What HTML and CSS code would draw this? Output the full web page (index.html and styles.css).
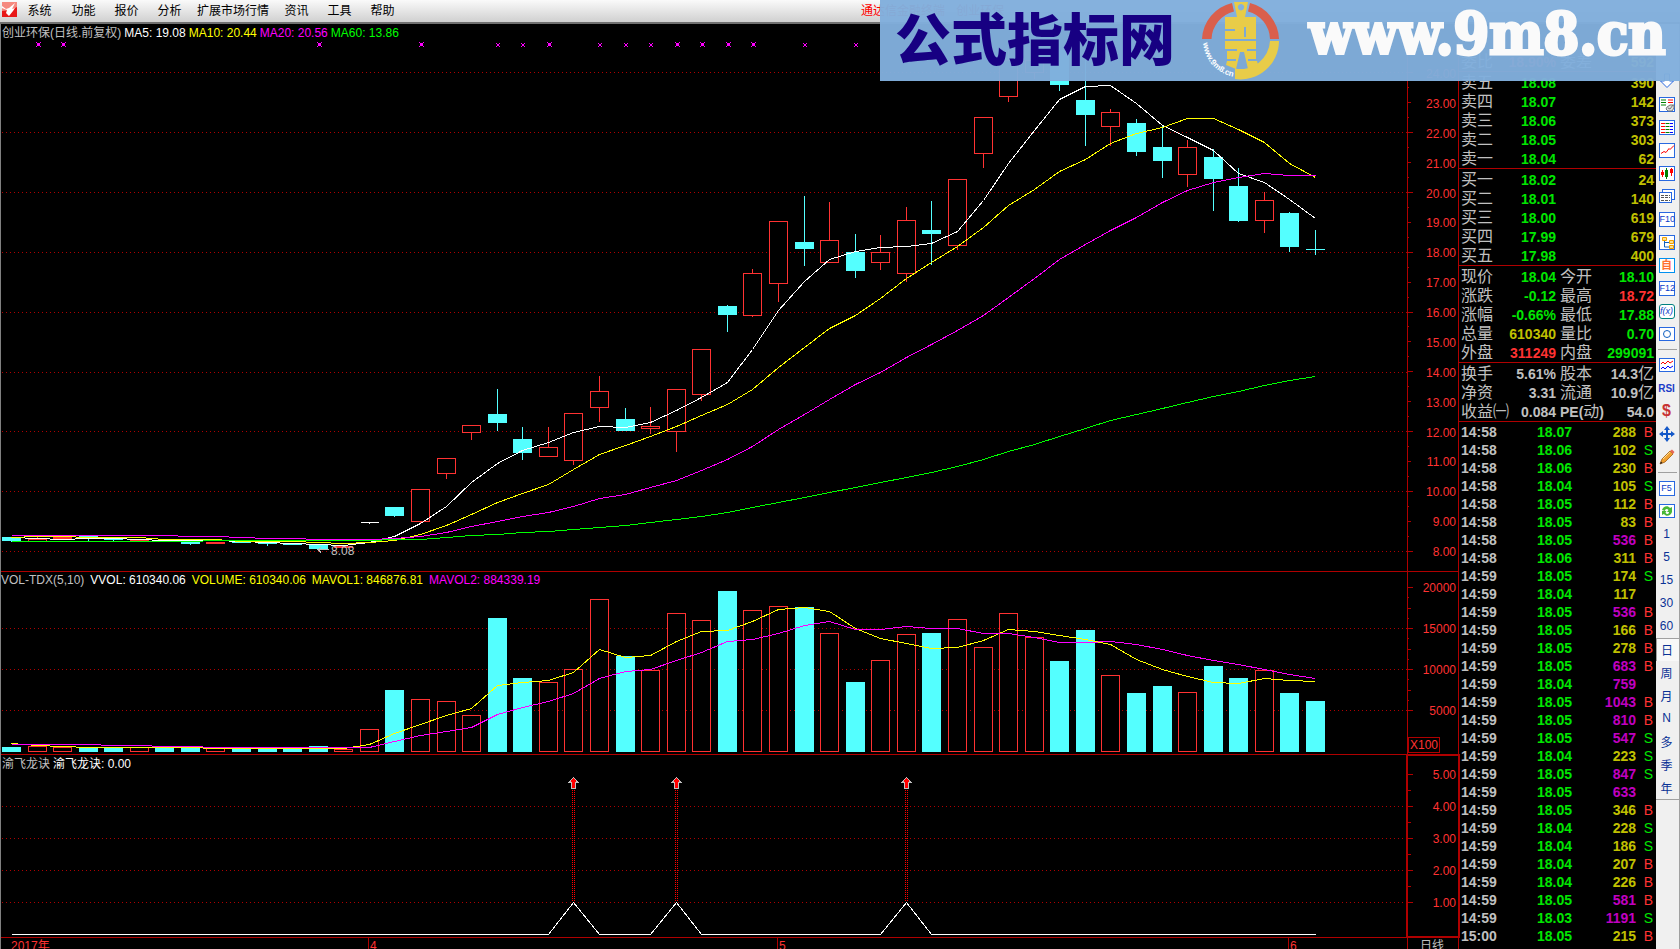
FILE: index.html
```html
<!DOCTYPE html>
<html lang="zh-CN">
<head>
  <meta charset="UTF-8" />
  <meta name="viewport" content="width=device-width, initial-scale=1" />
  <title>通达信金融终端 - 创业环保</title>
  <link rel="stylesheet" href="styles.css">
</head>
<body>
  <header class="menubar">
    <svg class="app-icon" viewBox="0 0 15 15">
      <rect width="15" height="15" fill="#e81818" />
      <path d="M0 0h15v5L9 8 0 9z" fill="#f58a80" />
      <path d="M0 4l4 3 3-1 6-5-3 6 3-1-2 3-4 5-3-3 1-3-5-2z" fill="#fff" />
    </svg>
    <nav class="menu">
      <button type="button">系统</button>
      <button type="button">功能</button>
      <button type="button">报价</button>
      <button type="button">分析</button>
      <button type="button" class="wide">扩展市场行情</button>
      <button type="button">资讯</button>
      <button type="button">工具</button>
      <button type="button">帮助</button>
    </nav>
    <div class="window-title">通达信金融终端 <span>创业环保</span></div>
  </header>

  <main class="workspace">
    <section class="charts">
      <div class="panel">
        <div class="plot">
          <svg id="pricePlot" viewBox="1 24 1406 547" preserveAspectRatio="none"></svg>
          <div class="legend">
            <span class="grey">创业环保(日线.前复权)</span>
            <span class="white">MA5: 19.08</span>
            <span class="yellow">MA10: 20.44</span>
            <span class="magenta">MA20: 20.56</span>
            <span class="lime">MA60: 13.86</span>
          </div>
        </div>
        <div class="axis">
          <svg id="priceTicks" viewBox="1408 24 50 547" preserveAspectRatio="none"></svg>
          <div class="scale scale-price" id="priceScale"></div>
        </div>
      </div>

      <div class="panel">
        <div class="plot">
          <svg id="volPlot" viewBox="1 572 1406 182" preserveAspectRatio="none"></svg>
          <div class="legend legend-vol">
            <span class="grey">VOL-TDX(5,10)</span>
            <span class="white">VVOL: 610340.06</span>
            <span class="yellow">VOLUME: 610340.06</span>
            <span class="yellow">MAVOL1: 846876.81</span>
            <span class="magenta">MAVOL2: 884339.19</span>
          </div>
        </div>
        <div class="axis">
          <svg id="volTicks" viewBox="1408 572 50 182" preserveAspectRatio="none"></svg>
          <div class="scale scale-vol">
            <span>20000</span><span>15000</span><span>10000</span><span>5000</span>
          </div>
          <span class="unit">X100</span>
        </div>
      </div>

      <div class="panel">
        <div class="plot">
          <svg id="signalPlot" viewBox="1 755 1406 182" preserveAspectRatio="none"></svg>
          <div class="legend">
            <span class="grey">渝飞龙诀</span>
            <span class="white">渝飞龙诀: 0.00</span>
          </div>
        </div>
        <div class="axis axis-active">
          <svg id="signalTicks" viewBox="1408 755 50 182" preserveAspectRatio="none"></svg>
          <div class="scale scale-signal">
            <span>5.00</span><span>4.00</span><span>3.00</span><span>2.00</span><span>1.00</span>
          </div>
        </div>
      </div>

      <div class="timeline">
        <div class="months">
          <span class="year">2017年</span>
          <span class="month">4</span>
          <span class="month">5</span>
          <span class="month">6</span>
        </div>
        <div class="period">日线</div>
      </div>
    </section>

    <aside class="quote">
      <table class="book book-head">
        <tr><th>委比</th><td class="red">18.90%</td><th>委差</th><td class="gold">592</td></tr>
      </table>
      <table class="book">
        <tr><th>卖五</th><td class="green">18.08</td><th></th><td class="gold">390</td></tr>
        <tr><th>卖四</th><td class="green">18.07</td><th></th><td class="gold">142</td></tr>
        <tr><th>卖三</th><td class="green">18.06</td><th></th><td class="gold">373</td></tr>
        <tr><th>卖二</th><td class="green">18.05</td><th></th><td class="gold">303</td></tr>
        <tr><th>卖一</th><td class="green">18.04</td><th></th><td class="gold">62</td></tr>
      </table>
      <table class="book">
        <tr><th>买一</th><td class="green">18.02</td><th></th><td class="gold">24</td></tr>
        <tr><th>买二</th><td class="green">18.01</td><th></th><td class="gold">140</td></tr>
        <tr><th>买三</th><td class="green">18.00</td><th></th><td class="gold">619</td></tr>
        <tr><th>买四</th><td class="green">17.99</td><th></th><td class="gold">679</td></tr>
        <tr><th>买五</th><td class="green">17.98</td><th></th><td class="gold">400</td></tr>
      </table>
      <table class="book">
        <tr><th>现价</th><td class="green">18.04</td><th>今开</th><td class="green">18.10</td></tr>
        <tr><th>涨跌</th><td class="green">-0.12</td><th>最高</th><td class="red">18.72</td></tr>
        <tr><th>涨幅</th><td class="green">-0.66%</td><th>最低</th><td class="green">17.88</td></tr>
        <tr><th>总量</th><td class="gold">610340</td><th>量比</th><td class="green">0.70</td></tr>
        <tr><th>外盘</th><td class="red">311249</td><th>内盘</th><td class="green">299091</td></tr>
      </table>
      <table class="book">
        <tr><th>换手</th><td>5.61%</td><th>股本</th><td>14.3<i>亿</i></td></tr>
        <tr><th>净资</th><td>3.31</td><th>流通</th><td>10.9<i>亿</i></td></tr>
        <tr><th>收益㈠</th><td>0.084</td><th><b>PE(</b>动<b>)</b></th><td>54.0</td></tr>
      </table>
      <div class="ticks">
        <table id="tickTable"></table>
      </div>
    </aside>

    <nav class="toolbar">
      <button type="button" aria-label="回退"></button>
      <button type="button" aria-label="上翻"></button>
      <button type="button" aria-label="下翻"><svg viewBox="0 0 16 16"><path d="M5.500 1v7h-4l6.500 6.500 6.500-6.500h-4v-7z" fill="#fff" stroke="#2868e0" /></svg></button>
      <button type="button" aria-label="报价"><svg viewBox="0 0 16 16"><rect class="frame" x=".5" y="1.500" width="15" height="14" /><path d="M2 4h5M2 6.500h5M2 9h5" stroke="#008000" /><path d="M9 4h5M9 6.500h5" stroke="#f00" /><path d="M8 11l3-2h4v3l-2 3H9l-2-2z" fill="#ddd" stroke="#777" /><path d="M9 12l2 1 3-4" stroke="#777" fill="none" /></svg></button>
      <button type="button" aria-label="列表"><svg viewBox="0 0 16 16"><rect class="frame" x=".5" y="1.500" width="15" height="14" /><path d="M2 4.500h4M2 7.500h4M2 10.500h4M2 13.500h4" stroke="#f00" /><path d="M6.500 4.500h4M6.500 7.500h4M6.500 10.500h4M6.500 13.500h4" stroke="#008000" /><path d="M11 4.500h3M11 7.500h3M11 10.500h3M11 13.500h3" stroke="#00f" /></svg></button>
      <button type="button" aria-label="分时"><svg viewBox="0 0 16 16"><rect class="frame" x=".5" y="1.500" width="15" height="14" /><path d="M2 11.500l3-2 2 1 3-4 1 1 4-4" fill="none" stroke="#f00" /></svg></button>
      <button type="button" aria-label="K线"><svg viewBox="0 0 16 16"><rect class="frame" x=".5" y="1.500" width="15" height="14" /><path d="M3.500 5v7M12.500 3v8" stroke="#f00" /><path d="M2 7h3v3H2zM11 4h3v4h-3z" fill="#f00" /><path d="M7.500 3v11" stroke="#008000" /><path d="M6 5h3v7H6z" fill="#008000" /></svg></button>
      <button type="button" aria-label="多窗"><svg viewBox="0 0 16 16"><rect class="frame" x="3.500" y="1.500" width="12" height="10" /><rect class="frame" x=".5" y="4.500" width="12" height="10" /><path d="M2 7.500h9M2 9.500h9M2 12.500h9" stroke="#555" stroke-dasharray="3 1" /></svg></button>
      <button type="button"><span class="key">F10</span></button>
      <button type="button" aria-label="关联"><svg viewBox="0 0 16 16"><rect class="frame" x=".5" y="1.500" width="15" height="14" /><path d="M5.500 6v7h5M5.500 8.500h5" stroke="#1060c0" fill="none" /><path d="M3.500 3.500h4v3h-4zM10.500 6.500h4v3h-4zM10.500 11.500h4v3h-4z" fill="#ffe090" stroke="#f0a000" /></svg></button>
      <button type="button"><span class="key key-self">自</span></button>
      <button type="button"><span class="key">F12</span></button>
      <button type="button"><span class="key key-fx">f(x)</span></button>
      <button type="button" aria-label="圆"><svg viewBox="0 0 16 16"><rect class="frame" x=".5" y="1.500" width="15" height="13" /><circle cx="8" cy="8" r="3.500" fill="none" stroke="#1060c0" /></svg></button>
      <hr>
      <button type="button" aria-label="叠加"><svg viewBox="0 0 16 16"><rect class="frame" x=".5" y="1.500" width="15" height="13" /><path d="M2 7l2-2 2 2 3-3 2 2 3-2" fill="none" stroke="#f00" /><path d="M2 12l2-2 2 2 3-3 2 2 3-2" fill="none" stroke="#00f" /></svg></button>
      <button type="button"><span class="rsi">RSI</span></button>
      <button type="button"><span class="dollar">$</span></button>
      <button type="button" aria-label="移动"><svg viewBox="0 0 16 16"><path d="M8 0l3 4H9v3h3V5l4 3-4 3V9H9v3h2l-3 4-3-4h2V9H4v2L0 8l4-3v2h3V4H5z" fill="#1458c8" /></svg></button>
      <button type="button" aria-label="画线"><svg viewBox="0 0 16 16"><path d="M1 15l2-5 8-8 3 3-8 8z" fill="#f0a030" stroke="#a05a10" stroke-width=".8" /><path d="M11 2l2-1.500 2.500 2.500L14 5z" fill="#e86858" /><path d="M1 15l1-2.500 1.500 1.500z" fill="#222" /><path d="M4 10l7-7" stroke="#ffe090" /></svg></button>
      <hr>
      <button type="button"><span class="key">F5</span></button>
      <button type="button" aria-label="刷新"><svg viewBox="0 0 16 16"><rect class="frame" x=".5" y="1.500" width="15" height="13" /><path d="M3 7c1-4 6-5 8-2l2-1v5H8l1.500-2C8 5 6 6 6 8zM13 9c-1 4-6 5-8 2l-2 1V8h4.500L6.500 9.500C8 12 10 11 10 9z" fill="#48b838" /></svg></button>
      <div class="periods">
        <button type="button">1</button>
        <button type="button">5</button>
        <button type="button">15</button>
        <button type="button">30</button>
        <button type="button">60</button>
        <button type="button" class="active">日</button>
        <button type="button">周</button>
        <button type="button">月</button>
        <button type="button">N</button>
        <button type="button">多</button>
        <button type="button">季</button>
        <button type="button">年</button>
      </div>
    </nav>
  </main>

  <div class="banner">
    <strong class="site-name">公式指标网</strong>
    <svg class="logo" viewBox="0 0 78 78">
      <path d="M0 37A38.500 38.500 0 0 1 30 1L32 9.500A29.500 29.500 0 0 0 9.500 37z" fill="#d95f4c" />
      <path d="M48 1A38.500 38.500 0 0 1 77 37H68A29.500 29.500 0 0 0 46 9.500z" fill="#d95f4c" />
      <path d="M77 39A38.500 38.500 0 0 1 33 77V66.500A29.500 29.500 0 0 0 68 39z" fill="#e8cc48" />
      <path fill-rule="evenodd" d="M32 0h14l-3 15h11v22H23V29h10v-2H23V15h12zM39 2a3.200 3.200 0 1 0 .01 0zM42 25v10h2V25z" fill="#e8cc48" />
      <path d="M23 39h31v8h-9v2h9v8h-8v2h9l1 4-10 4-4-17h-4l-4 17-10-4 1-4h9v-2h-9v-8h10v-2H23z" fill="#e8cc48" />
      <path id="ringText" d="M1 41A37.500 37.500 0 0 0 33 75" fill="none" />
      <text class="ring-text"><textPath href="#ringText">www.9m8.cn</textPath></text>
    </svg>
    <a class="site-url" href="#">www.9m8.cn</a>
  </div>

  <script src="chart.js"></script>
</body>
</html>
```
FILE: styles.css
```css
* {
  margin: 0;
  padding: 0;
  box-sizing: border-box;
}
body {
  display: flex;
  flex-direction: column;
  height: 100vh;
  overflow: hidden;
  background: #000;
  color: #c0c0c0;
  font-family: "Liberation Sans", "Noto Sans CJK SC", sans-serif;
  font-size: 12px;
}
button {
  border: none;
  background: none;
  font: inherit;
  cursor: pointer;
}

/* Menu bar */
.menubar {
  display: flex;
  flex: 0 0 24px;
  align-items: flex-start;
  background: linear-gradient(#fafafa, #d0d0d0);
  border-bottom: 2px solid #707070;
  color: #000;
  line-height: 21px;
}
.app-icon {
  width: 15px;
  height: 15px;
  margin: 2px 0 0 2px;
}
.menu {
  display: flex;
}
.menu button {
  width: 43px;
  padding-top: 1px;
  line-height: 21px;
}
.menu button:first-child {
  width: 45px;
}
.menu .wide {
  width: 84px;
}
.window-title {
  flex: 0 0 819px;
  margin-left: auto;
  padding-top: 1px;
  color: #f00;
}
.window-title span {
  margin-left: 8px;
}

/* Chart column */
.workspace {
  display: flex;
  flex: 1;
  min-height: 0;
}
.charts {
  flex: 1;
  min-width: 0;
  display: grid;
  grid-template-rows: minmax(0, 548fr) minmax(0, 183fr) minmax(0, 183fr) 11px;
  border-left: 1px solid #808080;
}
.panel {
  display: grid;
  grid-template-columns: minmax(0, 1fr) 52px;
  grid-template-rows: minmax(0, 1fr);
  border-bottom: 1px solid #b00000;
}
.plot,
.axis {
  display: grid;
  grid-template-columns: minmax(0, 1fr);
  grid-template-rows: minmax(0, 1fr);
  min-height: 0;
}
.plot > *,
.axis > * {
  grid-area: 1 / 1;
}
.plot svg,
.axis svg {
  width: 100%;
  height: 100%;
  shape-rendering: crispEdges;
}
.axis {
  border-left: 1px solid #b00000;
  border-right: 1px solid #b00000;
  color: #ff3232;
}
.axis-active {
  outline: 2px solid #b00000;
  outline-offset: -1px;
}
.legend {
  display: flex;
  align-self: start;
  gap: 3px;
  padding: 1px 0 0 1px;
  line-height: 16px;
  white-space: nowrap;
}
.legend-vol {
  gap: 6px;
  padding: 0;
}
.scale {
  display: flex;
  flex-direction: column;
  justify-content: space-between;
  padding-right: 2px;
  line-height: 16px;
  text-align: right;
}
.scale-price {
  padding-top: 42px;
  padding-bottom: 11px;
}
.scale-vol {
  padding-top: 8px;
  padding-bottom: 35px;
}
.scale-signal {
  padding-top: 12px;
  padding-bottom: 26px;
}
.unit {
  place-self: end start;
  margin-bottom: 1px;
  padding: 0 1px;
  border: 1px solid #b00000;
  line-height: 14px;
}
.timeline {
  display: flex;
  overflow: hidden;
  line-height: 16px;
}
.months {
  display: grid;
  grid-template-columns: 367fr 409fr 511fr 119fr;
  flex: 1;
  color: #ff3232;
}
.year {
  padding-left: 10px;
}
.month {
  padding-left: 1px;
  border-left: 1px solid #b00000;
}
.period {
  width: 52px;
  padding-left: 12px;
  border-left: 1px solid #b00000;
  border-right: 1px solid #b00000;
}

.white { color: #fff; }
.grey { color: #c0c0c0; }
.yellow { color: #ff0; }
.magenta { color: #f0f; }
.lime { color: #0f0; }
.green { color: #00e600; }
.red { color: #ff3232; }
.gold { color: #c0c000; }
.purple { color: #c000c0; }

/* Drawing */
.grid-line {
  stroke: #b00000;
  stroke-dasharray: 1 3;
}
.tick {
  stroke: #b00000;
}
.up {
  fill: #000;
  stroke: #ff3232;
}
.down {
  fill: #54ffff;
  stroke: #54ffff;
}
.flat {
  stroke: #fff;
}
.line {
  fill: none;
  stroke: currentColor;
}
.mark {
  stroke: #f0f;
}
.mark-big {
  fill: #f0f;
}
.beam {
  stroke: #f00;
  stroke-dasharray: 1 1;
}
.arrow {
  fill: #f00;
  stroke: #c0c0c0;
}
.low-label {
  fill: #c0c0c0;
}
.low-arrow {
  fill: none;
  stroke: #c0c0c0;
}

/* Quote column */
.quote {
  display: flex;
  flex-direction: column;
  flex: 0 0 197px;
  padding-top: 28px;
  font-size: 14px;
}
.book {
  width: 100%;
  padding: 1px 2px 0;
  border-bottom: 1px solid #b00000;
  border-spacing: 0;
  table-layout: fixed;
}
.book-head {
  padding-top: 0;
}
.book tr {
  height: 19px;
}
.book th,
.book td {
  height: 19px;
  line-height: 16px;
  white-space: nowrap;
}
.book th {
  width: 32px;
  font-size: 16px;
  font-weight: 400;
  text-align: left;
}
.book th b {
  font-size: 14px;
  line-height: 1;
}
.book th:nth-child(3) {
  width: 40px;
  padding-left: 4px;
}
.book td {
  width: 63px;
  font-weight: bold;
  text-align: right;
}
.book td:last-child {
  width: auto;
}
.book i {
  font-size: 16px;
  font-style: normal;
  font-weight: 400;
  line-height: 1;
}
.ticks {
  flex: 1;
  min-height: 0;
  padding: 1px 2px 0;
  overflow: hidden;
}
.ticks table {
  width: 100%;
  border-spacing: 0;
  table-layout: fixed;
}
.ticks td {
  height: 18px;
  line-height: 18px;
  font-weight: bold;
  text-align: right;
}
.ticks td:first-child {
  text-align: left;
}
.ticks td:nth-child(2) {
  width: 62px;
}
.ticks td:nth-child(3) {
  width: 64px;
}
.ticks td:last-child {
  width: 18px;
  padding-right: 1px;
  font-weight: normal;
}

/* Toolbar */
.toolbar {
  display: flex;
  flex-direction: column;
  flex: 0 0 24px;
  background: #f0f0f0;
  border-right: 1px solid #a0a0a0;
  color: #0a3296;
}
.toolbar button {
  display: flex;
  flex: 0 0 23px;
  align-items: center;
  justify-content: center;
  padding: 0 2px 1px 0;
}
.toolbar svg {
  width: 16px;
  height: 16px;
}
.toolbar hr {
  flex: 0 0 8px;
  margin: 0 2px;
  border: none;
  background: linear-gradient(#a0a0a0, #a0a0a0) 0 3px / 100% 1px no-repeat;
}
.frame {
  fill: #fff;
  stroke: #2868e0;
}
.key {
  width: 16px;
  height: 15px;
  border: 1px solid #2868e0;
  background: #fff;
  color: #0a3cc8;
  font-size: 9px;
  line-height: 13px;
  text-align: center;
}
.key-self {
  border-color: #0090f0;
  color: #ff7030;
  font-size: 11px;
  font-weight: bold;
}
.key-fx {
  border-color: #008080;
  border-radius: 3px;
  font-style: italic;
}
.rsi {
  color: #1a3cc8;
  font-size: 10px;
  font-weight: bold;
}
.dollar {
  color: #c83232;
  font-size: 16px;
  font-weight: bold;
}
.periods {
  display: flex;
  flex-direction: column;
  border-bottom: 1px solid #a0a0a0;
}
.toolbar .periods button {
  color: #0a3296;
}
.toolbar .periods .active {
  border-top: 1px solid #a0a0a0;
  border-left: 1px solid #a0a0a0;
  background: #f8f8f8;
}

/* Site banner lies over the top right corner */
.banner {
  position: absolute;
  top: 0;
  right: 0;
  display: flex;
  align-items: center;
  width: 800px;
  height: 81px;
  padding-left: 15px;
  background: rgba(129, 174, 220, 0.97);
}
.site-name {
  color: #170082;
  font-size: 56px;
  font-weight: 900;
  line-height: 84px;
}
.logo {
  width: 78px;
  height: 78px;
  margin: 0 29px 0 27px;
}
.ring-text {
  fill: #fff;
  font-size: 8px;
  font-weight: bold;
}
.site-url {
  align-self: flex-start;
  color: #fafafa;
  font-family: "DejaVu Serif Condensed", "DejaVu Serif", serif;
  font-size: 57px;
  font-weight: bold;
  line-height: 68px;
  text-decoration: none;
  -webkit-text-stroke: 3px #fafafa;
}
```
FILE: chart.js
```js
// Candles: [kind, high, body top, body bottom, low, volume top], u = up, d = down, w = flat
var candles = [
  ["d", 537, 537, 540, 541, 747], ["u", 537, 539, 541, 541, 746], ["u", 537, 537, 538, 539, 747],
  ["d", 536, 536, 538, 540, 747], ["d", 538, 538, 539, 541, 747], ["u", 539, 539, 540, 540, 747],
  ["d", 540, 540, 541, 541, 748], ["d", 542, 542, 543, 544, 748], ["u", 542, 542, 543, 543, 748],
  ["d", 541, 541, 542, 542, 748], ["d", 541, 541, 543, 545, 748], ["d", 543, 543, 544, 544, 749],
  ["d", 545, 545, 548, 549, 746], ["u", 546, 546, 547, 547, 749], ["w", 522, 522, 522, 523, 729],
  ["d", 507, 507, 515, 516, 690], ["u", 489, 489, 521, 523, 699], ["u", 458, 458, 473, 478, 701],
  ["u", 425, 425, 432, 439, 715], ["d", 389, 414, 422, 430, 618], ["d", 427, 439, 452, 459, 678],
  ["u", 427, 447, 456, 456, 682], ["u", 413, 413, 460, 464, 669], ["u", 376, 391, 407, 421, 599],
  ["d", 408, 419, 430, 430, 656], ["u", 407, 426, 428, 433, 670], ["u", 389, 389, 431, 451, 613],
  ["u", 349, 349, 394, 400, 620], ["d", 305, 306, 314, 331, 591], ["u", 269, 273, 315, 316, 610],
  ["u", 221, 221, 283, 301, 606], ["d", 196, 242, 248, 265, 607], ["u", 202, 240, 262, 262, 633],
  ["d", 234, 252, 270, 277, 682], ["u", 235, 252, 262, 269, 660], ["u", 207, 220, 273, 281, 634],
  ["d", 201, 230, 233, 264, 633], ["u", 179, 179, 245, 249, 619], ["u", 117, 117, 153, 167, 647],
  ["u", 50, 60, 96, 101, 613], ["u", 40, 60, 72, 78, 637], ["d", 40, 50, 84, 90, 661],
  ["d", 60, 100, 114, 145, 630], ["u", 109, 112, 126, 145, 675], ["d", 119, 123, 151, 155, 693],
  ["d", 125, 147, 160, 177, 686], ["u", 140, 147, 174, 186, 692], ["d", 149, 157, 178, 210, 666],
  ["d", 168, 186, 220, 221, 678], ["u", 192, 200, 220, 232, 670], ["d", 212, 213, 246, 251, 693],
  ["d", 230, 249, 249, 254, 701]
];

var ma5 = [537, 538, 539, 538, 538, 539, 540, 540, 540, 541, 542, 543, 544, 545, 542, 536, 523, 506, 482, 463, 450, 442, 432, 426, 427, 422, 410, 397, 382, 349, 310, 281, 259, 251, 247, 246, 243, 231, 200, 163, 130, 99, 86, 85, 103, 125, 137, 150, 173, 182, 199, 218];
var ma10 = [537, 536, 536, 537, 537, 537, 539, 539, 539, 541, 541, 541, 542, 543, 542, 540, 534, 525, 514, 502, 493, 484, 469, 454, 445, 436, 426, 415, 404, 389, 367, 347, 328, 315, 298, 278, 262, 246, 227, 205, 189, 171, 159, 143, 133, 127, 118, 118, 129, 142, 163, 177];
var ma20 = [535, 535, 535, 535, 535, 535, 535, 536, 536, 537, 538, 538, 539, 539, 539, 538, 536, 532, 526, 521, 516, 512, 506, 498, 494, 487, 480, 470, 459, 446, 429, 414, 399, 384, 372, 357, 344, 330, 315, 297, 278, 259, 244, 230, 217, 202, 190, 182, 177, 173, 175, 175];
var ma60 = [541, 541, 541, 541, 541, 541, 541, 541, 540, 540, 540, 540, 540, 540, 540, 539, 539, 537, 535, 534, 532, 531, 529, 527, 525, 522, 519, 516, 512, 507, 502, 497, 492, 487, 482, 477, 472, 466, 459, 451, 444, 436, 428, 420, 414, 408, 402, 396, 391, 385, 380, 376];
var mavol1 = [743, 745, 746, 747, 747, 747, 747, 747, 748, 748, 748, 748, 748, 748, 744, 733, 724, 715, 708, 685, 682, 680, 672, 649, 657, 655, 641, 631, 630, 621, 609, 607, 611, 628, 638, 643, 648, 647, 640, 629, 631, 635, 639, 644, 659, 669, 676, 682, 683, 678, 680, 681];
var mavol2 = [744, 744, 744, 744, 745, 745, 746, 746, 747, 747, 747, 747, 747, 747, 747, 741, 735, 731, 727, 714, 707, 701, 693, 678, 671, 669, 660, 652, 641, 639, 633, 625, 621, 629, 629, 626, 628, 628, 633, 633, 637, 642, 642, 641, 644, 649, 655, 660, 664, 669, 674, 678];

// x markers above the candles, big ones carry a filled centre
var bigMarks = [1, 2, 12, 16, 21, 26, 27, 28, 29];
var smallMarks = [19, 20, 23, 24, 25, 31, 33];
var signals = [22, 26, 35];

var trades = [
  ["14:58", "18.07", 288, "B"], ["14:58", "18.06", 102, "S"], ["14:58", "18.06", 230, "B"],
  ["14:58", "18.04", 105, "S"], ["14:58", "18.05", 112, "B"], ["14:58", "18.05", 83, "B"],
  ["14:58", "18.05", 536, "B"], ["14:58", "18.06", 311, "B"], ["14:59", "18.05", 174, "S"],
  ["14:59", "18.04", 117, ""], ["14:59", "18.05", 536, "B"], ["14:59", "18.05", 166, "B"],
  ["14:59", "18.05", 278, "B"], ["14:59", "18.05", 683, "B"], ["14:59", "18.04", 759, ""],
  ["14:59", "18.05", 1043, "B"], ["14:59", "18.05", 810, "B"], ["14:59", "18.05", 547, "S"],
  ["14:59", "18.04", 223, "S"], ["14:59", "18.05", 847, "S"], ["14:59", "18.05", 633, ""],
  ["14:59", "18.05", 346, "B"], ["14:59", "18.04", 228, "S"], ["14:59", "18.04", 186, "S"],
  ["14:59", "18.04", 207, "B"], ["14:59", "18.04", 226, "B"], ["14:59", "18.05", 581, "B"],
  ["14:59", "18.03", 1191, "S"], ["15:00", "18.05", 215, "B"]
];

function cx(i) {
  return Math.floor(11.43 + 25.57 * i) + 0.5;
}

function path(cls, d) {
  return `<path class="${cls}" d="${d}"/>`;
}

function gridLines(ys) {
  return ys.map(y => path("grid-line", `M2 ${y + 0.5}H1407`)).join("");
}

function box(kind, x, top, bottom) {
  var cls = kind === "d" ? "down" : "up";
  return `<rect class="${cls}" x="${x - 9}" y="${top + 0.5}" width="18" height="${bottom - top}"/>`;
}

function maLine(cls, ys) {
  var pts = ys.map((y, i) => cx(i) + "," + (y + 0.5)).join(" ");
  return `<polyline class="line ${cls}" points="${pts}"/>`;
}

function draw(id, markup) {
  document.getElementById(id).innerHTML = markup;
}

function drawPrice() {
  var out = gridLines([72, 132, 192, 252, 312, 372, 431, 491, 551]);
  candles.forEach((c, i) => {
    var x = cx(i);
    if (c[0] === "w") {
      out += path("flat", `M${x - 9} 522.5h18M${x} 522v2`);
      return;
    }
    out += path(c[0] === "d" ? "down" : "up", `M${x} ${c[1]}V${c[4] + 1}`);
    // a body without height is a plain dash
    out += c[2] === c[3] ? path("down", `M${x - 9.5} ${c[2] + 0.5}h19`) : box(c[0], x, c[2], c[3]);
  });
  out += maLine("white", ma5) + maLine("yellow", ma10) + maLine("magenta", ma20) + maLine("lime", ma60);
  smallMarks.forEach(i => {
    out += path("mark", `M${cx(i) - 1.5} 43l4 4m0 -4l-4 4`);
  });
  bigMarks.forEach(i => {
    out += path("mark", `M${cx(i) - 1.5} 42l5 5m0 -5l-5 5`);
    out += path("mark-big", `M${cx(i) - 0.5} 43h3v3h-3z`);
  });
  out += path("low-arrow", "M329 549.5h-11m3 -2l-3 2l3 3");
  out += `<text class="low-label" x="331" y="555">8.08</text>`;
  draw("pricePlot", out);

  var ticks = "";
  for (var k = 0; k < 33; k++) {
    var y = Math.round(72 + k * 14.97) + 0.5;
    var len = k % 4 === 0 ? 5 : k % 2 === 0 ? 3 : 1;
    ticks += path("tick", `M1408 ${y}h${len}`);
  }
  draw("priceTicks", ticks);

  var labels = "";
  for (var p = 24; p >= 8; p--) {
    labels += `<span>${p.toFixed(2)}</span>`;
  }
  draw("priceScale", labels);
}

function drawVolume() {
  var out = gridLines([628, 669, 710]);
  candles.forEach((c, i) => {
    out += box(c[0] === "w" ? "u" : c[0], cx(i), c[5], 751);
  });
  out += maLine("yellow", mavol1) + maLine("magenta", mavol2);
  draw("volPlot", out);

  var ticks = "";
  for (var k = 0; k < 13; k++) {
    var y = Math.round(587 + k * 10.25) + 0.5;
    ticks += path("tick", `M1408 ${y}h${k % 4 === 0 ? 5 : k % 2 === 0 ? 3 : 1}`);
  }
  draw("volTicks", ticks);
}

function drawSignal() {
  var out = gridLines([806, 838, 870, 902]);
  var ys = candles.map((c, i) => signals.includes(i) ? 902 : 934);
  signals.forEach(i => {
    var x = cx(i);
    out += path("beam", `M${x - 1} 790V902M${x + 1} 790V902`);
    out += path("arrow", `M${x} 777.5l4.5 5h-2.500v6h-4v-6h-2.500z`);
  });
  out += maLine("white", ys);
  draw("signalPlot", out);

  var ticks = "";
  for (var k = 0; k < 9; k++) {
    ticks += path("tick", `M1408 ${774.5 + k * 16}h${k % 2 ? 3 : 5}`);
  }
  draw("signalTicks", ticks);
}

function drawTrades() {
  draw("tickTable", trades.map(t => `<tr>
    <td>${t[0]}</td>
    <td class="green">${t[1]}</td>
    <td class="${t[2] >= 500 ? "purple" : "gold"}">${t[2]}</td>
    <td class="${t[3] === "B" ? "red" : "green"}">${t[3]}</td>
  </tr>`).join(""));
}

drawPrice();
drawVolume();
drawSignal();
drawTrades();
```
